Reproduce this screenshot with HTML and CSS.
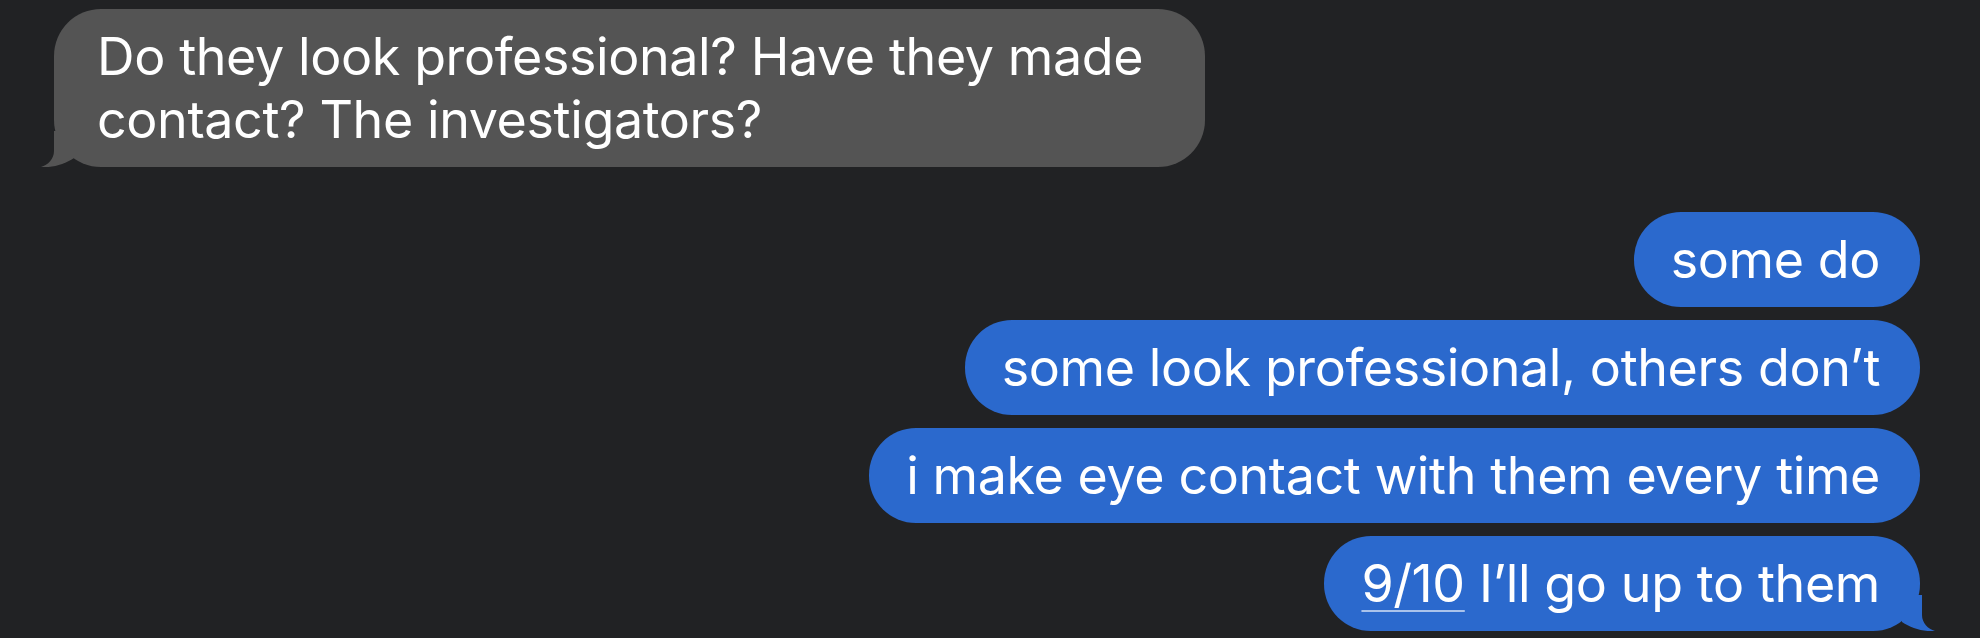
FILE: index.html
```html
<!DOCTYPE html>
<html lang="en">
<head>
    <meta charset="UTF-8">
    <meta name="viewport" content="width=device-width, initial-scale=1.0">
    <title>Messages</title>
    <link rel="stylesheet" href="styles.css">
</head>
<body>
    <div class="thread">
        <div class="row incoming">
            <div class="bubble grey">
                Do they look professional? Have they made<br>contact? The investigators?
                <svg class="tail" width="40" height="40" viewBox="0 0 40 40">
                    <path d="M13 4 L13 24 C13 32 7 38 0 40 C12 41 24 37 33 31 L33 4 Z"/>
                </svg>
            </div>
        </div>
        <div class="row outgoing first">
            <div class="bubble blue">some do</div>
        </div>
        <div class="row outgoing">
            <div class="bubble blue">some look professional, others don’t</div>
        </div>
        <div class="row outgoing">
            <div class="bubble blue">i make eye contact with them every time</div>
        </div>
        <div class="row outgoing">
            <div class="bubble blue"><span class="detected">9/10</span> I’ll go up to them
                <svg class="tail" width="40" height="40" viewBox="0 0 40 40">
                    <path d="M13 4 L13 24 C13 32 7 38 0 40 C12 41 24 37 33 31 L33 4 Z"/>
                </svg>
            </div>
        </div>
    </div>
    <div class="bottom-bar"></div>
</body>
</html>
```

FILE: styles.css
```css
html, body {
    margin: 0;
    height: 638px;
    overflow: hidden;
}
body {
    background-color: #212224;
    font-family: 'Inter', 'Helvetica Neue', sans-serif;
    color: #fff;
    display: flex;
    flex-direction: column;
}
.thread {
    flex: 1;
    display: flex;
    flex-direction: column;
    padding: 9px 60px 0 54px;
}
.row {
    display: flex;
    margin-bottom: 13px;
}
.incoming {
    justify-content: flex-start;
    margin-bottom: 45px;
}
.outgoing {
    justify-content: flex-end;
}
.bubble {
    position: relative;
    font-size: 52px;
    line-height: 63px;
    letter-spacing: -0.4px;
    padding: 16px 40px 16px 37px;
    border-radius: 47px;
    white-space: nowrap;
}
.grey {
    background-color: #545454;
    padding: 16px 62px 16px 43px;
}
.blue {
    background-color: #2b69cd;
}
.tail {
    position: absolute;
    bottom: 0;
}
.grey .tail {
    left: -13px;
    fill: #545454;
}
.blue .tail {
    right: -15px;
    fill: #2b69cd;
    transform: scaleX(-1);
}
.detected {
    text-decoration: underline;
    text-decoration-color: rgba(255, 255, 255, 0.6);
    text-decoration-thickness: 2px;
    text-underline-offset: 8px;
}
.bottom-bar {
    height: 2px;
    background-color: #46474a;
}
```
